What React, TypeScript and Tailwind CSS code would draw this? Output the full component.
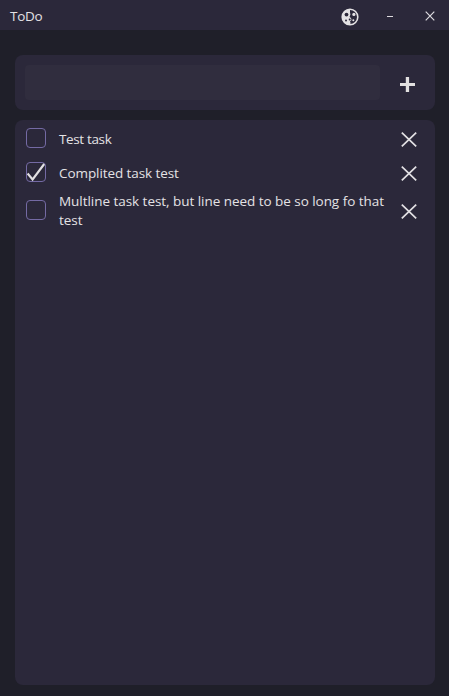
const tasks = [
  { text: 'Test task', done: false, row: 'h-[34px]', track: 'tracking-[-0.36px]' },
  { text: 'Complited task test', done: true, row: 'h-[34px]', track: 'tracking-[-0.08px]' },
  { text: 'Multline task test, but line need to be so long fo that test', done: false, row: 'h-[41px]', track: 'tracking-[-0.04px]' },
];

function Planet() {
  return (
    <svg width="18" height="18" viewBox="0 0 18 18">
      <circle cx="9" cy="9" r="7.8" fill="#2b283a" stroke="#e4e2e4" strokeWidth="1.6" />
      <path d="M9 1.2A7.8 7.8 0 0 0 9 16.8L9.6 15 9 13.5 10.5 12 10 10 8.6 9 9.4 6.5 9 4.5Z" fill="#e4e2e4" />
      <circle cx="5.5" cy="6.6" r="1.9" fill="#2b283a" />
      <circle cx="5" cy="12.4" r="1" fill="#2b283a" />
      <circle cx="8.7" cy="11.6" r="1" fill="#2b283a" />
      <circle cx="12.9" cy="6.4" r="1.6" fill="#e4e2e4" />
      <circle cx="12.3" cy="12.2" r="1" fill="#e4e2e4" />
    </svg>
  );
}

export default function App() {
  return (
    <div className="flex h-[696px] w-[449px] flex-col overflow-hidden bg-[#1f1f29] font-['Open_Sans','Noto_Sans',sans-serif] text-[13.5px] text-[#e4e2e5]">
      <header className="flex h-[30px] shrink-0 items-center bg-[#2b283a] pl-[10px] pr-[14px]">
        <h1 className="flex-1 pt-px leading-5 tracking-[-0.3px]">ToDo</h1>
        <button className="mr-7 mt-[3px]" aria-label="Theme"><Planet /></button>
        <button className="mr-8 mt-[3px] h-px w-[6px] bg-[#dddbdf]" aria-label="Minimize" />
        <button className="mt-px" aria-label="Close">
          <svg width="10" height="10" viewBox="0 0 10 10" stroke="#dddbdf" strokeWidth="1.2"><path d="M.7.7 9.3 9.3M9.3.7.7 9.3" /></svg>
        </button>
      </header>
      <main className="flex flex-1 flex-col gap-[10px] pl-[15px] pr-[14px] pt-[25px] pb-[11px]">
        <form className="flex h-[55px] items-center rounded-lg bg-[#2b283a] pl-[10px]">
          <input className="h-[35px] w-[355px] rounded bg-[#302d3e] px-2 outline-none" aria-label="New task" />
          <button type="button" className="ml-5 mt-[3px]" aria-label="Add">
            <svg width="15" height="15" viewBox="0 0 15 15" fill="#e2e0e0"><path d="M5.8 0h3.3v6h5.9v3H9.1v6H5.8V9H0V6h5.8Z" /></svg>
          </button>
        </form>
        <ul className="flex-1 rounded-lg bg-[#2b283a] pl-[11px] pr-[18px] pt-px">
          {tasks.map((t) => (
            <li key={t.text} className={`flex items-center ${t.row}`}>
              <span className="flex size-5 shrink-0 items-center justify-center rounded-[4px] border border-[#746aa4]">
                {t.done && <svg className="shrink-0" width="20" height="20" viewBox="0 0 20 20" fill="none" stroke="#e2e0e2" strokeWidth="2.1"><path d="m1.6 11.5 5 6L18.2 2" /></svg>}
              </span>
              <p className={`ml-[13px] w-[330px] shrink-0 pt-[2px] leading-[19px] ${t.track}`}>{t.text}</p>
              <button className="ml-[12px] mt-[3px] shrink-0" aria-label="Delete">
                <svg width="16" height="15" viewBox="0 0 16 15" stroke="#e2e0e3" strokeWidth="1.7"><path d="m.8.6 14.4 13.8M15.2.6.8 14.4" /></svg>
              </button>
            </li>
          ))}
        </ul>
      </main>
    </div>
  );
}
